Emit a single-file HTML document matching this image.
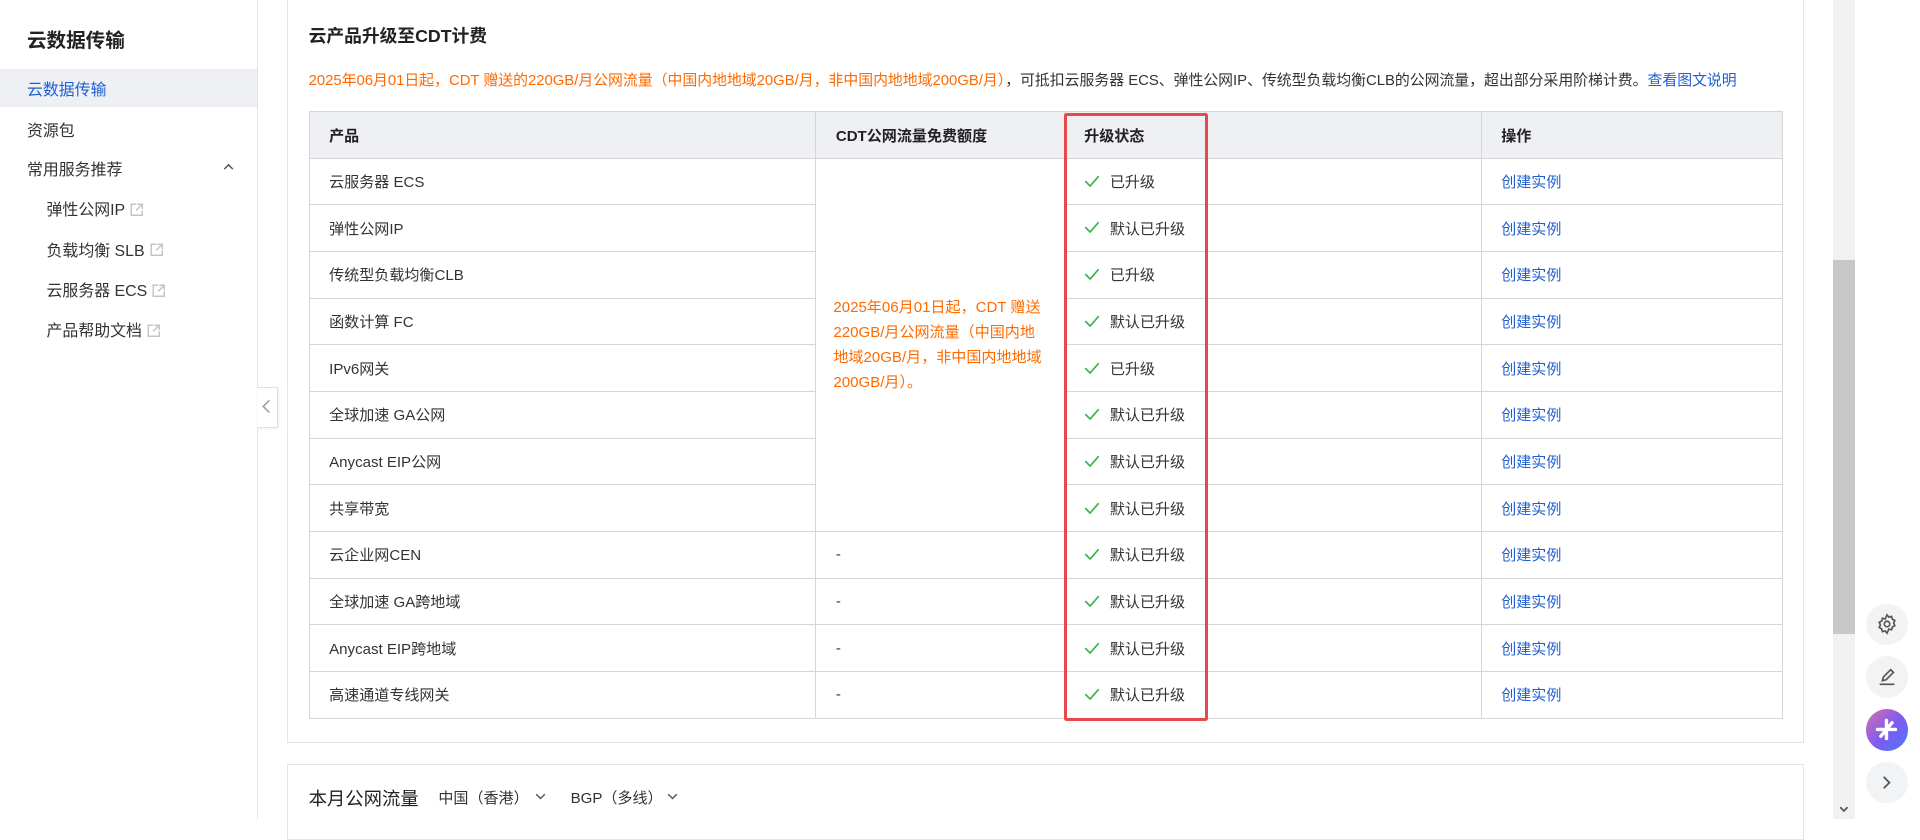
<!DOCTYPE html>
<html><head><meta charset="utf-8">
<style>
html,body{margin:0;padding:0;}
body{width:1568px;height:669px;overflow:hidden;zoom:1.22449;background:#fff;font-family:"Liberation Sans","Noto Sans CJK SC",sans-serif;color:#333;position:relative;}
.abs{position:absolute;}
.side{left:0;top:0;width:210px;height:669px;border-right:1px solid #e3e3e3;background:#fff;}
.side .t{position:absolute;left:22px;top:20px;font-size:16px;font-weight:bold;color:#222;}
.side .it{position:absolute;left:22px;font-size:13px;color:#333;}
.side .act{position:absolute;left:0;top:56px;width:210px;height:31px;background:#eef0f4;}
.ext{display:inline-block;width:11px;height:11px;margin-left:4px;vertical-align:-1px;}
.card{border:1px solid #e5e5e5;background:#fff;}
table{border-collapse:collapse;position:absolute;left:252px;top:91px;width:1204px;font-size:12.3px;}
td,th{border:1px solid #d6d6d6;height:37.3px;padding:0 0 0 16px;text-align:left;vertical-align:middle;}
th{background:#eef0f4;font-weight:bold;color:#222;height:37px;}
.lk{color:#1f5fd1;}
.ok{display:inline-block;width:13px;height:10px;margin-right:8px;vertical-align:0;}
.or{color:#ff6a00;}
</style></head><body>
<svg width="0" height="0" style="position:absolute"><defs>
<symbol id="ck" viewBox="0 0 13 10"><path d="M1 5l4 4 7-8" fill="none" stroke="#3cb64a" stroke-width="1.4"/></symbol>
<symbol id="ex" viewBox="0 0 11 11"><path d="M5 1H1v9h9V6M6 1h4v4M10 1L5 6" fill="none" stroke="#c4c4c4" stroke-width="1.2"/></symbol>
</defs></svg>
<div class="abs side">
  <div class="t">云数据传输</div>
  <div class="act"></div>
  <div class="it" style="top:63px;color:#1f5fd1;">云数据传输</div>
  <div class="it" style="top:96px;">资源包</div>
  <div class="it" style="top:128px;">常用服务推荐</div>
  <svg class="abs" style="left:182px;top:133px" width="9" height="6" viewBox="0 0 9 6"><path d="M1 5l3.5-3.5L8 5" fill="none" stroke="#555" stroke-width="1.2"/></svg>
  <div class="it" style="left:38px;top:161px;">弹性公网IP<svg class="ext"><use href="#ex"/></svg></div>
  <div class="it" style="left:38px;top:194px;">负载均衡 SLB<svg class="ext"><use href="#ex"/></svg></div>
  <div class="it" style="left:38px;top:227px;">云服务器 ECS<svg class="ext"><use href="#ex"/></svg></div>
  <div class="it" style="left:38px;top:260px;">产品帮助文档<svg class="ext"><use href="#ex"/></svg></div>
</div>
<div class="abs" style="left:210px;top:316px;width:16px;height:32px;border:1px solid #e0e0e0;border-left:none;background:#fff;box-shadow:1px 1px 3px rgba(0,0,0,.08);"></div>
<svg class="abs" style="left:214px;top:326px" width="7" height="12" viewBox="0 0 7 12"><path d="M6 1L1 6l5 5" fill="none" stroke="#999" stroke-width="1.2"/></svg>

<div class="abs card" style="left:234px;top:-2px;width:1238px;height:607px;"></div>
<div class="abs" style="left:252px;top:18px;font-size:14.5px;font-weight:bold;color:#222;">云产品升级至CDT计费</div>
<div class="abs" style="left:252px;top:56px;font-size:12.15px;white-space:nowrap;"><span class="or">2025年06月01日起，CDT 赠送的220GB/月公网流量（中国内地地域20GB/月，非中国内地地域200GB/月）</span>，可抵扣云服务器 ECS、弹性公网IP、传统型负载均衡CLB的公网流量，超出部分采用阶梯计费。<span class="lk">查看图文说明</span></div>

<table>
<tr><th style="width:397px">产品</th><th style="width:186px">CDT公网流量免费额度</th><th style="width:99px">升级状态</th><th style="width:208px"></th><th>操作</th></tr>
<tr><td>云服务器 ECS</td><td rowspan="8" style="vertical-align:middle;padding:0 12px 0 14px;line-height:20.5px;" class="or">2025年06月01日起，CDT 赠送220GB/月公网流量（中国内地地域20GB/月，非中国内地地域200GB/月）。</td><td><svg class="ok"><use href="#ck"/></svg>已升级</td><td></td><td class="lk">创建实例</td></tr>
<tr><td>弹性公网IP</td><td><svg class="ok"><use href="#ck"/></svg>默认已升级</td><td></td><td class="lk">创建实例</td></tr>
<tr><td>传统型负载均衡CLB</td><td><svg class="ok"><use href="#ck"/></svg>已升级</td><td></td><td class="lk">创建实例</td></tr>
<tr><td>函数计算 FC</td><td><svg class="ok"><use href="#ck"/></svg>默认已升级</td><td></td><td class="lk">创建实例</td></tr>
<tr><td>IPv6网关</td><td><svg class="ok"><use href="#ck"/></svg>已升级</td><td></td><td class="lk">创建实例</td></tr>
<tr><td>全球加速 GA公网</td><td><svg class="ok"><use href="#ck"/></svg>默认已升级</td><td></td><td class="lk">创建实例</td></tr>
<tr><td>Anycast EIP公网</td><td><svg class="ok"><use href="#ck"/></svg>默认已升级</td><td></td><td class="lk">创建实例</td></tr>
<tr><td>共享带宽</td><td><svg class="ok"><use href="#ck"/></svg>默认已升级</td><td></td><td class="lk">创建实例</td></tr>
<tr><td>云企业网CEN</td><td>-</td><td><svg class="ok"><use href="#ck"/></svg>默认已升级</td><td></td><td class="lk">创建实例</td></tr>
<tr><td>全球加速 GA跨地域</td><td>-</td><td><svg class="ok"><use href="#ck"/></svg>默认已升级</td><td></td><td class="lk">创建实例</td></tr>
<tr><td>Anycast EIP跨地域</td><td>-</td><td><svg class="ok"><use href="#ck"/></svg>默认已升级</td><td></td><td class="lk">创建实例</td></tr>
<tr><td>高速通道专线网关</td><td>-</td><td><svg class="ok"><use href="#ck"/></svg>默认已升级</td><td></td><td class="lk">创建实例</td></tr>
</table>
<div class="abs" style="left:869px;top:92px;width:113px;height:492px;border:3px solid #e8474b;border-radius:2px;"></div>

<div class="abs card" style="left:234px;top:624px;width:1238px;height:60px;"></div>
<div class="abs" style="left:252px;top:641px;font-size:15px;color:#222;">本月公网流量</div>
<div class="abs" style="left:358px;top:643px;font-size:12.3px;">中国（香港）</div>
<svg class="abs" style="left:437px;top:648px" width="9" height="6" viewBox="0 0 9 6"><path d="M1 1l3.5 3.5L8 1" fill="none" stroke="#555" stroke-width="1.2"/></svg>
<div class="abs" style="left:466px;top:643px;font-size:12.3px;">BGP（多线）</div>
<svg class="abs" style="left:545px;top:648px" width="9" height="6" viewBox="0 0 9 6"><path d="M1 1l3.5 3.5L8 1" fill="none" stroke="#555" stroke-width="1.2"/></svg>

<div class="abs" style="left:1497px;top:0;width:18px;height:669px;background:#f1f1f1;"></div>
<div class="abs" style="left:1497px;top:212px;width:18px;height:306px;background:#c8c8c8;"></div>
<svg class="abs" style="left:1502px;top:658px" width="8" height="6" viewBox="0 0 8 6"><path d="M1 1l3 3 3-3" fill="none" stroke="#555" stroke-width="1.4"/></svg>

<div class="abs" style="left:1524px;top:493px;width:34px;height:34px;border-radius:50%;background:#f2f3f5;"></div>
<svg class="abs" style="left:1532px;top:501px" width="18" height="18" viewBox="0 0 24 24" fill="none" stroke="#555" stroke-width="1.8"><circle cx="12" cy="12" r="3"/><path d="M12 2l2 2.5 3-.8.8 3 2.7 1.5-1.3 2.8 1.3 2.8-2.7 1.5-.8 3-3-.8L12 22l-2-2.5-3 .8-.8-3L3.5 15.8 4.8 13 3.5 10.2l2.7-1.5.8-3 3 .8z"/></svg>
<div class="abs" style="left:1524px;top:536px;width:34px;height:34px;border-radius:50%;background:#f2f3f5;"></div>
<svg class="abs" style="left:1532px;top:544px" width="18" height="18" viewBox="0 0 24 24" fill="none" stroke="#555" stroke-width="1.8"><path d="M4 20h16M7 16l1-4 8-8 3 3-8 8z"/></svg>
<div class="abs" style="left:1524px;top:579px;width:34px;height:34px;border-radius:50%;background:linear-gradient(135deg,#d86fb0,#7a5cf0 55%,#4b7bff);"></div>
<svg class="abs" style="left:1530px;top:585px" width="22" height="22" viewBox="0 0 24 24" stroke="#fff" stroke-width="3" stroke-linecap="round"><path d="M12 4v16M4 12h16M7 18l10-12"/></svg>
<div class="abs" style="left:1524px;top:622px;width:34px;height:34px;border-radius:50%;background:#f2f3f5;"></div>
<svg class="abs" style="left:1534px;top:632px" width="14" height="14" viewBox="0 0 24 24" fill="none" stroke="#555" stroke-width="2.5"><path d="M8 4l8 8-8 8"/></svg>
</body></html>
